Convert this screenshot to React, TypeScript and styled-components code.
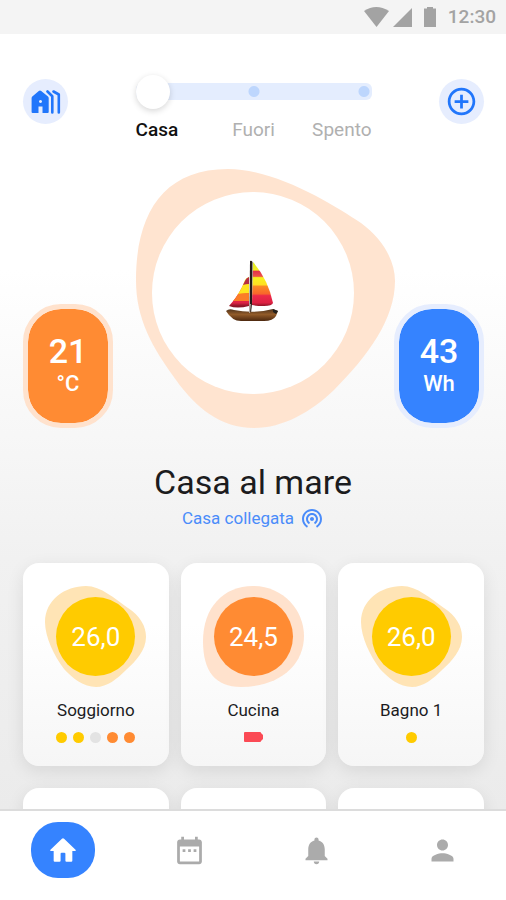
import React, { useState } from "react";
import styled, { createGlobalStyle } from "styled-components";

const GlobalStyle = createGlobalStyle`
  *, *::before, *::after { box-sizing: border-box; }
  body { margin: 0; }
  button, input { font: inherit; }
`;

const blue = "#3583ff";
const orange = "#ff8b33";
const yellow = "#ffcb00";

const Screen = styled.div`
  display: flex;
  flex-direction: column;
  height: 100vh;
  overflow: hidden;
  font-family: Roboto, "Liberation Sans", sans-serif;
  color: #1c1c1e;
  background: linear-gradient(#ffffff 30%, #f1f1f1 62%, #ebebeb 90%);
`;

const StatusBar = styled.div`
  display: flex;
  flex: none;
  align-items: center;
  justify-content: flex-end;
  height: 34px;
  padding: 0 10px;
  background: #f4f4f4;
  color: #a3a3a3;
  font-size: 19px;
  font-weight: 500;
  line-height: 24px;
`;

const StatusIcons = styled.svg`
  display: block;
  margin-right: 10px;
`;

const Header = styled.header`
  display: flex;
  flex: none;
  align-items: flex-start;
  justify-content: space-between;
  padding: 40px 22px 0 23px;
`;

const RoundButton = styled.button`
  display: grid;
  place-items: center;
  width: 45px;
  height: 45px;
  margin-top: 5px;
  padding: 0;
  border: 0;
  border-radius: 50%;
  background: #e6edfe;
  color: #2176fb;
`;

const ModePicker = styled.div`
  width: 236px;
`;

const ModeRange = styled.input`
  display: block;
  width: 100%;
  height: 34px;
  margin: 0;
  appearance: none;
  background: none;

  &::-webkit-slider-runnable-track {
    height: 17px;
    border-radius: 6px;
    background:
      radial-gradient(circle at 50% 50%, #bdd6fd 5px, transparent 6px),
      radial-gradient(circle at calc(100% - 8px) 50%, #bdd6fd 5px, transparent 6px),
      #e4edfe;
  }

  &::-webkit-slider-thumb {
    appearance: none;
    width: 34px;
    height: 34px;
    margin-top: -8px;
    border-radius: 50%;
    background: #ffffff;
    box-shadow: 0 2px 6px rgba(0, 0, 0, 0.16);
  }
`;

const ModeLabels = styled.div`
  display: grid;
  grid-template-columns: 1fr auto 1fr;
  margin-top: 12px;
  font-size: 19px;
  line-height: 20px;
`;

const ModeLabel = styled.span<{ $active: boolean }>`
  color: ${(p) => (p.$active ? "#111111" : "#b0b0b0")};
  font-weight: ${(p) => (p.$active ? 500 : 400)};

  &:last-child { text-align: right; }
`;

const Hero = styled.section`
  display: flex;
  flex: none;
  align-items: flex-end;
  justify-content: space-between;
  padding: 29px 22px 0 23px;
`;

const HouseShape = styled.svg`
  display: block;
  overflow: visible;
`;

const Meter = styled.div<{ $color: string; $ring: string }>`
  display: flex;
  flex-direction: column;
  align-items: center;
  justify-content: center;
  width: 90px;
  height: 124px;
  border: 5px solid ${(p) => p.$ring};
  border-radius: 38px;
  background: ${(p) => p.$color};
  background-clip: padding-box;
  color: #ffffff;
`;

const MeterValue = styled.strong`
  font-size: 34px;
  font-weight: 500;
  line-height: 36px;
`;

const MeterUnit = styled.span`
  font-size: 22px;
  font-weight: 500;
  line-height: 30px;
`;

const Heading = styled.section`
  display: flex;
  flex: none;
  flex-direction: column;
  align-items: center;
  padding: 33px 22px 0;
`;

const Title = styled.h1`
  margin: 0;
  font-size: 34px;
  font-weight: 400;
  line-height: 42px;
`;

const Connection = styled.p`
  display: flex;
  align-items: center;
  gap: 6px;
  margin: 3px 0 0;
  color: #4a8cfa;
  font-size: 17px;
  line-height: 24px;
`;

const RoomList = styled.main`
  display: grid;
  flex: 1;
  grid-template-columns: repeat(3, 1fr);
  grid-auto-rows: max-content;
  gap: 22px 12px;
  min-height: 0;
  padding: 33px 22px 0 23px;
  overflow: hidden;
`;

const RoomCard = styled.article`
  display: flex;
  flex-direction: column;
  align-items: center;
  min-height: 203px;
  padding: 23px 0 0;
  border-radius: 16px;
  background: linear-gradient(#ffffff 30%, #f6f6f6);
  box-shadow: 0 5px 18px rgba(0, 0, 0, 0.09);
`;

const Gauge = styled.div`
  display: grid;
  place-items: center;

  > * { grid-area: 1 / 1; }
`;

const GaugeValue = styled.span`
  color: #ffffff;
  font-size: 26px;
  font-weight: 400;
  line-height: 32px;
`;

const RoomName = styled.h2`
  margin: 11px 0 0;
  font-size: 17px;
  font-weight: 400;
  line-height: 24px;
`;

const Signals = styled.div`
  display: flex;
  align-items: center;
  gap: 6px;
  height: 12px;
  margin-top: 9px;
`;

const Dot = styled.span<{ $color: string }>`
  width: 11px;
  height: 11px;
  border-radius: 50%;
  background: ${(p) => p.$color};
`;

const TabBar = styled.nav`
  display: grid;
  flex: none;
  grid-template-columns: repeat(4, 1fr);
  justify-items: center;
  height: 91px;
  padding-top: 11px;
  border-top: 2px solid #dcdcdc;
  background: #ffffff;
`;

const Tab = styled.button<{ $active?: boolean }>`
  display: grid;
  place-items: center;
  width: 64px;
  height: 56px;
  padding: 0;
  border: 0;
  border-radius: 27px;
  background: ${(p) => (p.$active ? blue : "transparent")};
  color: ${(p) => (p.$active ? "#ffffff" : "#ababab")};
`;

const Icon = ({ d, size }: { d: string; size: number }) => (
  <svg width={size} height={size} viewBox="0 0 24 24" fill="currentColor" aria-hidden="true">
    <path d={d} />
  </svg>
);

const icons = {
  add: "M13 7h-2v4H7v2h4v4h2v-4h4v-2h-4V7zm-1-5C6.48 2 2 6.48 2 12s4.48 10 10 10 10-4.48 10-10S17.52 2 12 2zm0 18c-4.41 0-8-3.59-8-8s3.59-8 8-8 8 3.59 8 8-3.59 8-8 8z",
  tethering:
    "M12 11c-1.1 0-2 .9-2 2s.9 2 2 2 2-.9 2-2-.9-2-2-2zm6 2c0-3.31-2.69-6-6-6s-6 2.69-6 6c0 2.22 1.21 4.15 3 5.19l1-1.74c-1.19-.7-2-1.97-2-3.45 0-2.21 1.79-4 4-4s4 1.79 4 4c0 1.48-.81 2.75-2 3.45l1 1.74c1.79-1.04 3-2.97 3-5.19zM12 3C6.48 3 2 7.48 2 13c0 3.7 2.01 6.92 4.99 8.65l1-1.73C5.61 18.53 4 15.96 4 13c0-4.42 3.58-8 8-8s8 3.58 8 8c0 2.96-1.61 5.53-4 6.92l1 1.73c2.99-1.73 5-4.95 5-8.65 0-5.52-4.48-10-10-10z",
  home: "M10.2 20v-5.2q0-.8.8-.8h2q.8 0 .8.8V20q0 .8.8.8h3.6q.8 0 .8-.8v-7.2h2.1q1.1-.2.3-1L12.8 3.6q-.8-.7-1.6 0L2.6 11.8q-.8.8.3 1H5V20q0 .8.8.8h3.6q.8 0 .8-.8z",
  calendar:
    "M9 11H7v2h2v-2zm4 0h-2v2h2v-2zm4 0h-2v2h2v-2zm2-7h-1V2h-2v2H8V2H6v2H5c-1.11 0-1.99.9-1.99 2L3 20c0 1.1.89 2 2 2h14c1.1 0 2-.9 2-2V6c0-1.1-.9-2-2-2zm0 16H5V9h14v11z",
  bell: "M12 22c1.1 0 2-.9 2-2h-4c0 1.1.89 2 2 2zm6-6v-5c0-3.07-1.64-5.64-4.5-6.32V4c0-.83-.67-1.5-1.5-1.5s-1.5.67-1.5 1.5v.68C7.63 5.36 6 7.92 6 11v5l-2 2v1h16v-1l-2-2z",
  person:
    "M12 12c2.21 0 4-1.79 4-4s-1.79-4-4-4-4 1.79-4 4 1.79 4 4 4zm0 2c-2.67 0-8 1.34-8 4v2h16v-2c0-2.66-5.33-4-8-4z",
};

const HousesIcon = () => (
  <svg width="30" height="24" viewBox="0 0 30 24" aria-hidden="true">
    <path
      fill="currentColor"
      fillRule="evenodd"
      d="M7.8.9Q9 0 10.2.9L17 6.5Q17.7 7.1 17.7 8V22Q17.7 23 16.7 23H11.5V16.5H7.5V23H1.6Q.6 23 .6 22V8Q.6 7.1 1.3 6.5ZM9.5 10a1.5 1.5 0 1 0 .01 0Z"
    />
    <path
      d="M16.5 1.5 21.3 6.200V22.500M22.500 1.500 27.800 4.500V22.500"
      fill="none"
      stroke="currentColor"
      strokeWidth="2.6"
      strokeLinejoin="round"
      strokeLinecap="round"
    />
  </svg>
);

const Sailboat = () => (
  <g transform="translate(90 91)">
    <defs>
      <linearGradient id="sail" x1="0" y1="1" x2="0" y2="46" gradientUnits="userSpaceOnUse">
        <stop offset="0" stopColor="#d8e92c" />
        <stop offset=".2" stopColor="#f4ec20" />
        <stop offset=".23" stopColor="#e5324a" />
        <stop offset=".34" stopColor="#ed5348" />
        <stop offset=".37" stopColor="#f8f31d" />
        <stop offset=".53" stopColor="#ffdf23" />
        <stop offset=".56" stopColor="#fb8b25" />
        <stop offset=".73" stopColor="#f8652b" />
        <stop offset=".77" stopColor="#ed2949" />
        <stop offset=".93" stopColor="#dd2143" />
        <stop offset="1" stopColor="#8d1426" />
      </linearGradient>
      <linearGradient id="hull" x1="0" y1="49" x2="0" y2="61" gradientUnits="userSpaceOnUse">
        <stop offset="0" stopColor="#4d321c" />
        <stop offset=".45" stopColor="#925b29" />
        <stop offset="1" stopColor="#4c280f" />
      </linearGradient>
    </defs>
    <path d="M27 2Q42 19 47 43Q46 46 38 46Q30 46 26 45Z" fill="url(#sail)" />
    <path d="M23 17V46Q11 49 3 46Q14 34 19 20Q20 18 23 17Z" fill="url(#sail)" />
    <path d="M19 21Q20 18 23 17V24L17 25Z" fill="#b62d43" />
    <path d="M17 25 23 24V33L12 34Q15 30 17 25Z" fill="#ffe51f" />
    <path d="M12 34 23 33V41L7 41Q10 38 12 34Z" fill="#fb7c27" />
    <path d="M24 1Q25.5 0 26.5 2L26 44 25 53H23.5Z" fill="#241b18" />
    <path d="M0 51Q3 48 8 50Q27 54 47 49L52 51 50 56Q47 61 38 61H15Q6 61 0 51Z" fill="url(#hull)" />
    <path d="M47 49 52 51 50 54 47 52Z" fill="#23211d" />
    <path d="M23 44H25L24 53H23Z" fill="#b3a79e" />
  </g>
);

const pebble =
  "M41 0C56 0 70 13 83 22C95 30 101 40 101 51C101 64 91 75 81 84C72 93 62 101 51 101C39 101 27 92 19 83C9 70 0 51 0 36C0 14 20 0 41 0Z";
const roundPebble =
  "M50 0C80 0 101 24 101 50C101 80 75 101 38 101C12 101 0 85 0 55C0 22 20 0 50 0Z";

type Room = {
  name: string;
  value: string;
  color: string;
  halo: string;
  shape: string;
  dots: string[];
  lowBattery?: boolean;
};

const rooms: Room[] = [
  {
    name: "Soggiorno",
    value: "26,0",
    color: yellow,
    halo: "#ffe4b5",
    shape: pebble,
    dots: [yellow, yellow, "#e3e3e3", orange, orange],
  },
  { name: "Cucina", value: "24,5", color: orange, halo: "#ffe2cd", shape: roundPebble, dots: [], lowBattery: true },
  { name: "Bagno 1", value: "26,0", color: yellow, halo: "#ffe4b5", shape: pebble, dots: [yellow] },
];

const modes = ["Casa", "Fuori", "Spento"];

export default function App() {
  const [mode, setMode] = useState(0);

  return (
    <>
      <GlobalStyle />
      <Screen>
        <StatusBar>
          <StatusIcons width="74" height="22" viewBox="0 0 74 22" fill="currentColor" aria-hidden="true">
            <path d="M0 5Q12-3 25 5L12.5 21Z" />
            <path d="M48 2V21H29Z" />
            <path d="M60 2.5H63V1H69V2.5H72V21H60Z" />
          </StatusIcons>
          12:30
        </StatusBar>

        <Header>
          <RoundButton type="button" aria-label="Case">
            <HousesIcon />
          </RoundButton>
          <ModePicker>
            <ModeRange
              type="range"
              min={0}
              max={2}
              step={1}
              value={mode}
              aria-label="Modalità"
              aria-valuetext={modes[mode]}
              onChange={(e) => setMode(Number(e.target.value))}
            />
            <ModeLabels>
              {modes.map((label, i) => (
                <ModeLabel key={label} $active={i === mode}>
                  {label}
                </ModeLabel>
              ))}
            </ModeLabels>
          </ModePicker>
          <RoundButton type="button" aria-label="Aggiungi">
            <Icon d={icons.add} size={33} />
          </RoundButton>
        </Header>

        <Hero>
          <Meter $color={orange} $ring="#ffe2cd">
            <MeterValue>21</MeterValue>
            <MeterUnit>°C</MeterUnit>
          </Meter>
          <HouseShape width="236" height="259" viewBox="0 0 236 259" aria-hidden="true">
            <path
              fill="#ffe4d0"
              d="M92 0C140 0 198 36 225 54C247 70 259 92 259 112C259 150 232 187 198 221C175 243 147 259 118 259C85 259 60 239 40 211C16 178 0 150 0 111C0 45 27 0 92 0Z"
            />
            <circle cx="117" cy="124" r="101" fill="#ffffff" />
            <Sailboat />
          </HouseShape>
          <Meter $color={blue} $ring="#e6edfe">
            <MeterValue>43</MeterValue>
            <MeterUnit>Wh</MeterUnit>
          </Meter>
        </Hero>

        <Heading>
          <Title>Casa al mare</Title>
          <Connection>
            Casa collegata
            <Icon d={icons.tethering} size={24} />
          </Connection>
        </Heading>

        <RoomList>
          {rooms.map((room) => (
            <RoomCard key={room.name}>
              <Gauge>
                <svg width="101" height="101" viewBox="0 0 101 101" aria-hidden="true">
                  <path d={room.shape} fill={room.halo} />
                  <circle cx="50.5" cy="50.5" r="39.5" fill={room.color} />
                </svg>
                <GaugeValue>{room.value}</GaugeValue>
              </Gauge>
              <RoomName>{room.name}</RoomName>
              <Signals>
                {room.dots.map((color, i) => (
                  <Dot key={i} $color={color} />
                ))}
                {room.lowBattery && (
                  <svg width="19" height="10" viewBox="0 0 19 10" role="img" aria-label="Batteria scarica">
                    <path d="M1 0H16Q17 0 17 1L19 3V7L17 9Q17 10 16 10H1Q0 10 0 9V1Q0 0 1 0Z" fill="#fb4a55" />
                  </svg>
                )}
              </Signals>
            </RoomCard>
          ))}
          <RoomCard />
          <RoomCard />
          <RoomCard />
        </RoomList>

        <TabBar>
          <Tab type="button" $active aria-label="Casa">
            <Icon d={icons.home} size={32} />
          </Tab>
          <Tab type="button" aria-label="Calendario">
            <Icon d={icons.calendar} size={33} />
          </Tab>
          <Tab type="button" aria-label="Notifiche">
            <Icon d={icons.bell} size={33} />
          </Tab>
          <Tab type="button" aria-label="Profilo">
            <Icon d={icons.person} size={33} />
          </Tab>
        </TabBar>
      </Screen>
    </>
  );
}
